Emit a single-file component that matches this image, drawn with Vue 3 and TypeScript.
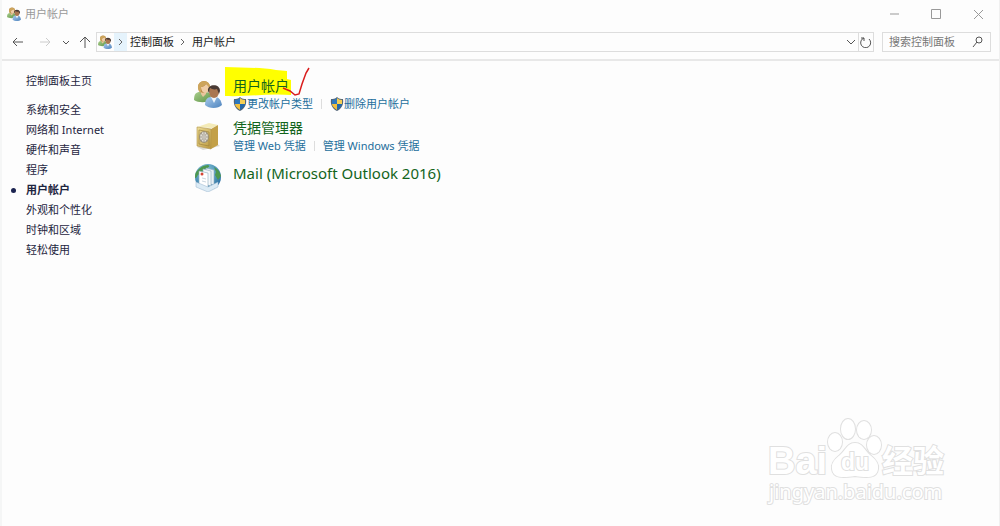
<script setup lang="ts">
import { ref } from 'vue'

interface Task {
  label: string
  shield: boolean
}
interface Category {
  title: string
  icon: string
  marked: boolean
  tasks: Task[]
}

const query = ref('')
const current = '用户帐户'
const links: string[] = [
  '系统和安全',
  '网络和 Internet',
  '硬件和声音',
  '程序',
  '用户帐户',
  '外观和个性化',
  '时钟和区域',
  '轻松使用',
]
const categories: Category[] = [
  {
    title: '用户帐户',
    icon: 'users',
    marked: true,
    tasks: [
      { label: '更改帐户类型', shield: true },
      { label: '删除用户帐户', shield: true },
    ],
  },
  {
    title: '凭据管理器',
    icon: 'safe',
    marked: false,
    tasks: [
      { label: '管理 Web 凭据', shield: false },
      { label: '管理 Windows 凭据', shield: false },
    ],
  },
  { title: 'Mail (Microsoft Outlook 2016)', icon: 'mail', marked: false, tasks: [] },
]
</script>

<template>
  <div class="window">
    <svg class="defs" aria-hidden="true">
      <defs>
        <linearGradient id="green" x1="0" y1="0" x2="1" y2="1">
          <stop offset="0" stop-color="#a9cd8c" /><stop offset="1" stop-color="#5f9548" />
        </linearGradient>
        <linearGradient id="blue" x1="0" y1="0" x2="1" y2="1">
          <stop offset="0" stop-color="#a9cbec" /><stop offset="1" stop-color="#4d83bd" />
        </linearGradient>
        <linearGradient id="gold" x1="0" y1="0" x2="1" y2="1">
          <stop offset="0" stop-color="#efdf98" /><stop offset="1" stop-color="#b9963d" />
        </linearGradient>
        <radialGradient id="globe" cx="0.4" cy="0.3" r="0.8">
          <stop offset="0" stop-color="#8fd0dc" /><stop offset="1" stop-color="#1e639c" />
        </radialGradient>
        <symbol id="users" viewBox="0 0 28 28">
          <path d="M0 20c0-6 2-8 6-8h6c4 0 5 3 5 8-4 3-13 3-17 0z" fill="url(#green)" />
          <path d="M7 11h5v3l-3 3-2-3z" fill="#e8c49c" />
          <ellipse cx="10" cy="7" rx="6" ry="6" fill="#b98b48" />
          <path d="M7 7c2 0 4-1 5-3 2 1 3 2 3 4 0 3-2 5-4 5s-4-3-4-6z" fill="#efcda7" />
          <path d="M4 8c-1-9 13-9 12 0-2-2-3-3-4-4-2 2-4 3-5 3v6c-2-1-3-3-3-5z" fill="#cda55c" />
          <path d="M11 25c0-5 2-8 6-8h4c4 0 6 3 7 8-4 4-13 4-17 0z" fill="url(#blue)" />
          <path d="M17 17h6l-3 6z" fill="#f0f5fa" />
          <ellipse cx="20" cy="12" rx="5" ry="6" fill="#aa7650" />
          <path d="M14 11c-1-7 12-8 12 0l-1 3-2-5c-3 1-5 0-7-1l-1 5z" fill="#493a34" />
        </symbol>
        <symbol id="safe" viewBox="0 0 28 28">
          <path d="M3 25l6 3 17-4-5-4z" fill="#dddbd4" />
          <path d="M3 5l12-4 9 2-6 3z" fill="#f4ebb8" />
          <path d="M17 7l7-4v20l-7 4z" fill="#c3a048" />
          <path d="M3 5l14 2v20L3 24z" fill="url(#gold)" stroke="#b2934a" stroke-width=".6" />
          <path d="M5 8l10 2v14L5 22z" fill="none" stroke="#a0843c" stroke-width=".7" />
          <ellipse cx="10" cy="15" rx="5" ry="6" fill="#9b9077" />
          <ellipse cx="10" cy="15" rx="4" ry="5" fill="#dfdcd2" />
          <path d="M6 15h8M10 10v10M7 11l6 8M13 11l-6 8" stroke="#8b8275" stroke-width=".7" />
          <circle cx="10" cy="15" r="2" fill="#c7c2b8" />
        </symbol>
        <symbol id="mail" viewBox="0 0 28 28">
          <circle cx="14" cy="13" r="13" fill="url(#globe)" />
          <path d="M3 7c3-4 7-6 11-6 3 1 0 3-3 4s-1 4-5 5-2 4-5 4c0-3 0-5 2-7zM20 3c4 2 6 5 7 9l-3 4-3-5 1-3z" fill="#4d9850" />
          <path d="M12 4l8 2v15l-8-2z" fill="#e9f0f5" stroke="#8eabbe" stroke-width=".6" />
          <path d="M9 5l8 2v15l-8-2z" fill="#f4f8fb" stroke="#8eabbe" stroke-width=".6" />
          <path d="M5 7l9 2v15l-9-3z" fill="#fff" stroke="#8eabbe" stroke-width=".6" />
          <circle cx="8" cy="10" r="1.500" fill="#d64534" />
          <path d="M8 14l4 1M8 17l4 1" stroke="#a4b9c7" stroke-width=".6" />
          <path d="M2 18l12 5 10-5v5l-10 5-12-5z" fill="#dcebf5" stroke="#94b3cc" stroke-width=".5" />
        </symbol>
        <symbol id="shield" viewBox="0 0 14 14">
          <path d="M7 0c2 2 4 2 6 2 1 6-2 10-6 12C3 12 0 8 1 2c2 0 4 0 6-2z" fill="#526477" />
          <path d="M7 1v6H2V3c2 0 4-1 5-2z" fill="#2e78bd" />
          <path d="M7 1c1 1 3 2 5 2v4H7z" fill="#f6cf53" />
          <path d="M2 7h5v6C4 11 2 9 2 7z" fill="#f3c03d" />
          <path d="M12 7H7v6c3-2 5-4 5-6z" fill="#2468aa" />
        </symbol>
      </defs>
    </svg>

    <header class="titlebar">
      <svg class="small-icon"><use href="#users" /></svg>
      <h1>用户帐户</h1>
      <div class="controls">
        <button type="button" aria-label="最小化"><svg viewBox="0 0 12 12"><path d="M2 6h9" /></svg></button>
        <button type="button" aria-label="最大化"><svg viewBox="0 0 12 12"><path d="M1.500 1.500h9v9h-9z" /></svg></button>
        <button type="button" aria-label="关闭"><svg viewBox="0 0 12 12"><path d="M2 2l9 9M11 2l-9 9" /></svg></button>
      </div>
    </header>

    <nav class="toolbar" aria-label="地址">
      <div class="history">
        <button type="button" aria-label="后退"><svg viewBox="0 0 12 12"><path d="M11 6H1M5 2L1 6l4 4" /></svg></button>
        <button type="button" class="faded" aria-label="前进"><svg viewBox="0 0 12 12"><path d="M1 6h10M7 2l4 4-4 4" /></svg></button>
        <button type="button" class="recent" aria-label="最近的位置"><svg viewBox="0 0 12 12"><path d="M3 5l3 3 3-3" /></svg></button>
        <button type="button" class="up" aria-label="向上"><svg viewBox="0 0 12 12"><path d="M6 12V1M1 6l5-5 5 5" /></svg></button>
      </div>
      <div class="address">
        <svg class="small-icon"><use href="#users" /></svg>
        <span class="chevron lit"><svg viewBox="0 0 12 12"><path d="M4 3l3 3-3 3" /></svg></span>
        <a href="#panel">控制面板</a>
        <span class="chevron"><svg viewBox="0 0 12 12"><path d="M4 3l3 3-3 3" /></svg></span>
        <a href="#accounts">用户帐户</a>
        <button type="button" class="drop" aria-label="展开"><svg viewBox="0 0 12 12"><path d="M2 4l4 4 4-4" /></svg></button>
        <button type="button" class="refresh" aria-label="刷新"><svg viewBox="0 0 12 12"><path d="M1 2h3v3M4 2a5 5 0 1 0 5 1" /></svg></button>
      </div>
      <label class="search">
        <input v-model="query" type="text" placeholder="搜索控制面板" aria-label="搜索控制面板" />
        <svg viewBox="0 0 12 12"><circle cx="7" cy="4" r="3" /><path d="M5 6l-4 5" /></svg>
      </label>
    </nav>

    <div class="content">
      <aside>
        <a class="home" href="#home">控制面板主页</a>
        <ul>
          <li v-for="link in links" :key="link" :class="{ current: link === current }">
            <a href="#category">{{ link }}</a>
          </li>
        </ul>
      </aside>
      <main>
        <section v-for="item in categories" :key="item.title" class="category">
          <svg class="big-icon"><use :href="'#' + item.icon" /></svg>
          <div class="details">
            <h2 :class="{ single: !item.tasks.length }">
              <svg v-if="item.marked" class="marker" viewBox="0 0 86 32" aria-hidden="true">
                <path d="M0 0c17 1 34 0 51 3l11 1v8l4 1v15c-22-2-43 2-66 1z" fill="#ff0" />
              </svg>
              <a href="#open">{{ item.title }}</a>
              <svg v-if="item.marked" class="marker" viewBox="0 0 86 32" aria-hidden="true">
                <path d="M58 21l7 3 5 4 4-1 3-10 4-11 3-5" fill="none" stroke="#d91c1c" stroke-width="1.500" />
              </svg>
            </h2>
            <div v-if="item.tasks.length" class="tasks">
              <a v-for="task in item.tasks" :key="task.label" href="#task">
                <svg v-if="task.shield" class="shield"><use href="#shield" /></svg>{{ task.label }}
              </a>
            </div>
          </div>
        </section>
      </main>
    </div>

    <svg class="watermark" viewBox="0 0 190 96" role="img" aria-label="Baidu 经验">
      <g class="outline">
        <text class="brand" x="3" y="59">Bai</text>
        <ellipse cx="70" cy="27" rx="7" ry="9" />
        <ellipse cx="83" cy="14" rx="7" ry="10" />
        <ellipse cx="99" cy="15" rx="7" ry="9" />
        <ellipse cx="109" cy="30" rx="7" ry="9" />
        <path d="M90 28c-8 0-9 7-15 12-5 4-9 8-8 14 1 9 10 9 23 7 13 2 22 2 23-7 1-6-3-10-8-14-6-5-7-12-15-12z" />
        <text class="du" x="76" y="55">du</text>
        <text class="cn" x="117" y="57">经验</text>
        <text class="url" x="4" y="84">jingyan.baidu.com</text>
      </g>
    </svg>
  </div>
</template>

<style>
body {
  margin: 0;
  background: #fdfdfd;
}
</style>

<style scoped>
.window {
  position: relative;
  box-sizing: border-box;
  min-height: 100vh;
  border-left: 2px solid #f5f6f6;
  border-right: 1px solid #f0f0f0;
  background: #fdfdfd;
  color: #1e2540;
  font: 11px/20px "Noto Sans", "Noto Sans CJK SC", sans-serif;
}
.defs {
  position: absolute;
  width: 0;
  height: 0;
}
a {
  color: inherit;
  text-decoration: none;
}
button {
  display: flex;
  align-items: center;
  justify-content: center;
  padding: 0;
  border: 0;
  background: none;
  color: #555;
}
button svg,
.chevron svg,
.search svg {
  width: 12px;
  height: 12px;
  flex: none;
  fill: none;
  stroke: currentColor;
}
.small-icon {
  width: 14px;
  height: 14px;
  flex: none;
}
.titlebar {
  display: flex;
  align-items: center;
  height: 28px;
  padding-left: 5px;
}
h1 {
  margin: 0 0 0 4px;
  color: #999;
  font-size: 11px;
  font-weight: 400;
}
.controls {
  display: flex;
  margin-left: auto;
}
.controls button {
  width: 42px;
  height: 28px;
  color: #999;
}
.toolbar {
  display: flex;
  align-items: center;
  height: 28px;
  padding: 0 8px 3px 8px;
  border-bottom: 2px solid #e8e8e8;
}
.history {
  display: flex;
  width: 86px;
}
.history button {
  width: 16px;
  height: 20px;
}
.history .faded {
  margin-left: 11px;
  color: #ccc;
}
.history .recent {
  margin-left: 5px;
}
.history .up {
  margin-left: 3px;
}
.address,
.search {
  display: flex;
  align-items: center;
  box-sizing: border-box;
  height: 20px;
  border: 1px solid #ddd;
}
.address {
  flex: 1;
  padding-left: 1px;
  color: #222;
}
.chevron {
  display: flex;
  align-items: center;
  justify-content: center;
  width: 18px;
  height: 18px;
  color: #666;
}
.lit {
  width: 13px;
  margin-right: 3px;
  background: #e5f3fc;
}
.address .small-icon {
  margin-right: 2px;
}
.drop {
  width: 14px;
  height: 18px;
  margin-left: auto;
}
.refresh {
  width: 15px;
  height: 18px;
  border-left: 1px solid #ddd;
}
.search {
  width: 109px;
  margin-left: 8px;
  padding: 0 6px;
  color: #555;
}
.search input {
  flex: 1;
  min-width: 0;
  padding: 0;
  border: 0;
  outline: 0;
  background: none;
  color: #333;
  font: inherit;
}
.search input::placeholder {
  color: #777;
  opacity: 1;
}
.content {
  display: flex;
  padding-top: 10px;
}
aside {
  width: 192px;
  flex: none;
}
.home {
  display: block;
  margin: 0 0 9px 24px;
}
ul {
  margin: 0;
  padding: 0;
  list-style: none;
}
li {
  position: relative;
  padding-left: 24px;
}
.current {
  font-weight: 700;
}
.current::before {
  content: "";
  position: absolute;
  top: 8px;
  left: 9px;
  width: 5px;
  height: 5px;
  border-radius: 50%;
  background: #1b2350;
}
main {
  flex: 1;
  min-width: 0;
  padding-top: 6px;
}
.category {
  display: flex;
  min-height: 42px;
}
.big-icon {
  width: 28px;
  height: 28px;
  flex: none;
  margin-top: 3px;
}
.details {
  margin-left: 11px;
}
h2 {
  position: relative;
  margin: 0;
  color: #12641b;
  font-size: 14px;
  font-weight: 400;
  line-height: 18px;
}
h2.single {
  font-size: 15px;
  line-height: 24px;
}
h2 a {
  position: relative;
}
.marker {
  position: absolute;
  top: -10px;
  left: -8px;
  width: 86px;
  height: 32px;
}
.tasks {
  display: flex;
  margin-top: 2px;
  line-height: 14px;
  color: #246f9c;
}
.tasks a {
  display: flex;
  align-items: center;
}
.tasks a + a {
  margin-left: 8px;
}
.tasks a + a::before {
  content: "";
  width: 1px;
  height: 10px;
  margin-right: 8px;
  background: #ddd;
}
.shield {
  width: 14px;
  height: 14px;
}
.watermark {
  position: absolute;
  right: 44px;
  bottom: 15px;
  width: 190px;
  height: 96px;
}
.outline {
  fill: #fff;
  stroke: #e0e0e0;
  stroke-width: 2px;
  paint-order: stroke;
}
.brand {
  font: 700 38px "Liberation Sans", sans-serif;
}
.du {
  font: 700 23px "Liberation Sans", sans-serif;
}
.cn {
  font: 700 31px "Noto Sans CJK SC", sans-serif;
}
.url {
  font: 20px "Noto Sans", sans-serif;
}
</style>
